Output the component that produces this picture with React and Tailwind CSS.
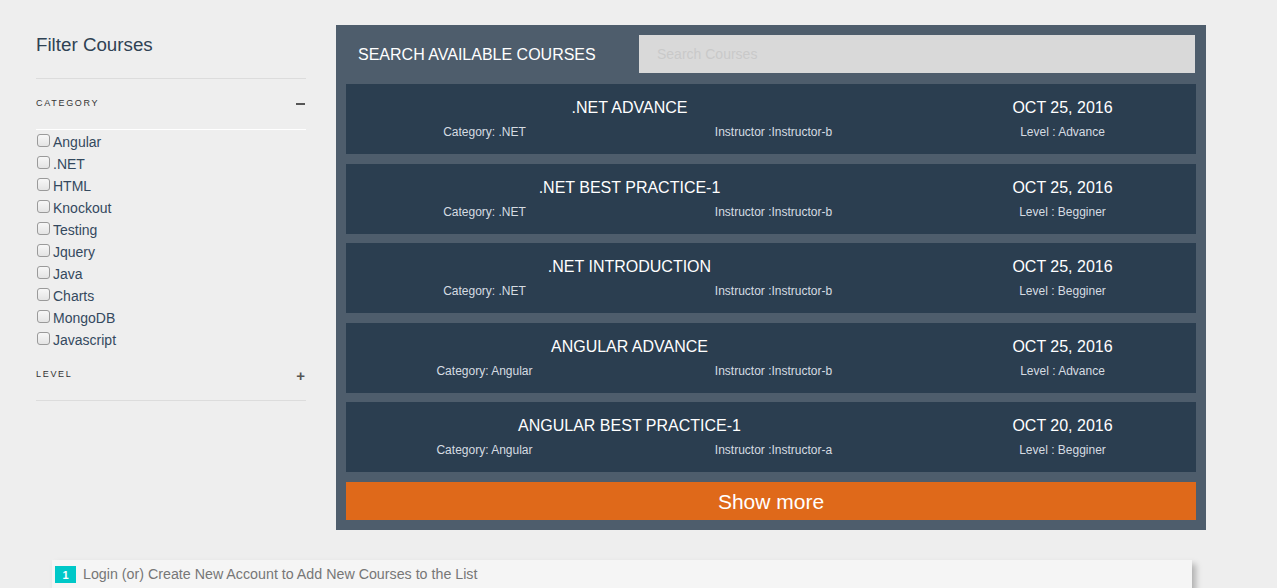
import React from 'react';

const categories = ['Angular', '.NET', 'HTML', 'Knockout', 'Testing', 'Jquery', 'Java', 'Charts', 'MongoDB', 'Javascript'];

const courses = [
    { title: '.NET ADVANCE', category: '.NET', instructor: 'Instructor-b', date: 'OCT 25, 2016', level: 'Advance' },
    { title: '.NET BEST PRACTICE-1', category: '.NET', instructor: 'Instructor-b', date: 'OCT 25, 2016', level: 'Begginer' },
    { title: '.NET INTRODUCTION', category: '.NET', instructor: 'Instructor-b', date: 'OCT 25, 2016', level: 'Begginer' },
    { title: 'ANGULAR ADVANCE', category: 'Angular', instructor: 'Instructor-b', date: 'OCT 25, 2016', level: 'Advance' },
    { title: 'ANGULAR BEST PRACTICE-1', category: 'Angular', instructor: 'Instructor-a', date: 'OCT 20, 2016', level: 'Begginer' },
];

function CourseCard({ course }) {
    return (
        <div className="h-[70px] bg-[#2b3e50] grid grid-cols-[283px_284px_283px] content-start pt-[15px]">
            <div className="col-span-2 text-center text-white text-[16px] leading-[18px]">{course.title}</div>
            <div className="text-center text-white text-[16px] leading-[18px] pl-[16px]">{course.date}</div>
            <div className="text-center text-[#d6dce2] text-[12px] leading-[14px] mt-[8px] pr-[6px]">Category: {course.category}</div>
            <div className="text-center text-[#d6dce2] text-[12px] leading-[14px] mt-[8px] pl-[5px]">Instructor :{course.instructor}</div>
            <div className="text-center text-[#d6dce2] text-[12px] leading-[14px] mt-[8px] pl-[16px]">Level : {course.level}</div>
        </div>
    );
}

export default function App() {
    return (
        <div className="min-h-[588px] bg-[#eeeeee] font-['Liberation_Sans',Arial,sans-serif] overflow-hidden">
            <div className="flex gap-[30px] pl-[36px] pt-[25px]">
                {/* sidebar */}
                <aside className="w-[270px]">
                    <h3 className="text-[18.75px] leading-[20px] text-[#2f4254] mt-[10px]">Filter Courses</h3>
                    <div className="border-t border-[#dcdcdc] mt-[23px]" />
                    <div className="flex items-center justify-between h-[50px]">
                        <span className="text-[9px] tracking-[1.7px] text-[#333]">CATEGORY</span>
                        <span className="w-[9px] h-[2px] bg-[#555] mr-[1px]" />
                    </div>
                    <div className="border-t border-white" />
                    <ul className="pt-[1px]">
                        {categories.map((c) => (
                            <li key={c} className="flex items-center h-[22px]">
                                <input
                                    type="checkbox"
                                    className="appearance-none w-[13px] h-[13px] m-0 ml-[1px] mr-[3px] -mt-[3px] rounded-[3px] border border-[#9a9a9a] bg-[linear-gradient(#f7f7f7,#e4e4e4)]"
                                />
                                <span className="text-[14px] text-[#34495e]">{c}</span>
                            </li>
                        ))}
                    </ul>
                    <div className="flex items-center justify-between h-[50px] -mt-[1px]">
                        <span className="text-[9px] tracking-[1.7px] text-[#333]">LEVEL</span>
                        <span className="text-[15px] font-bold text-[#555] leading-none mr-[1px]">+</span>
                    </div>
                    <div className="border-t border-[#dcdcdc]" />
                </aside>

                {/* courses panel */}
                <main className="w-[870px] bg-[#4e5d6c] p-[10px]">
                    <div className="flex items-center h-[38px]">
                        <h2 className="w-[293px] pl-[12px] text-white text-[16px] pt-[2px]">SEARCH AVAILABLE COURSES</h2>
                        <input
                            type="text"
                            placeholder="Search Courses"
                            className="flex-1 h-[38px] mr-[1px] bg-[#d9d9d9] px-[18px] text-[14px] placeholder:text-[#c9c9c9] outline-none"
                        />
                    </div>
                    <div className="flex flex-col gap-[9.6px] mt-[11px]">
                        {courses.map((c) => (
                            <CourseCard key={c.title} course={c} />
                        ))}
                    </div>
                    <button className="w-full h-[38px] mt-[10px] bg-[#df691a] text-white text-[21px]">Show more</button>
                </main>
            </div>

            <div className="ml-[52px] mt-[30px] w-[1140px] bg-[#f5f5f5] shadow-[4px_4px_6px_rgba(0,0,0,0.25)] h-[40px] flex items-start pt-[6px] pl-[3px]">
                <span className="w-[21px] h-[17px] bg-[#00c8c8] text-white text-[11px] font-bold flex items-center justify-center">1</span>
                <span className="ml-[7px] text-[14.25px] text-[#777] leading-[17px]">Login (or) Create New Account to Add New Courses to the List</span>
            </div>
        </div>
    );
}
